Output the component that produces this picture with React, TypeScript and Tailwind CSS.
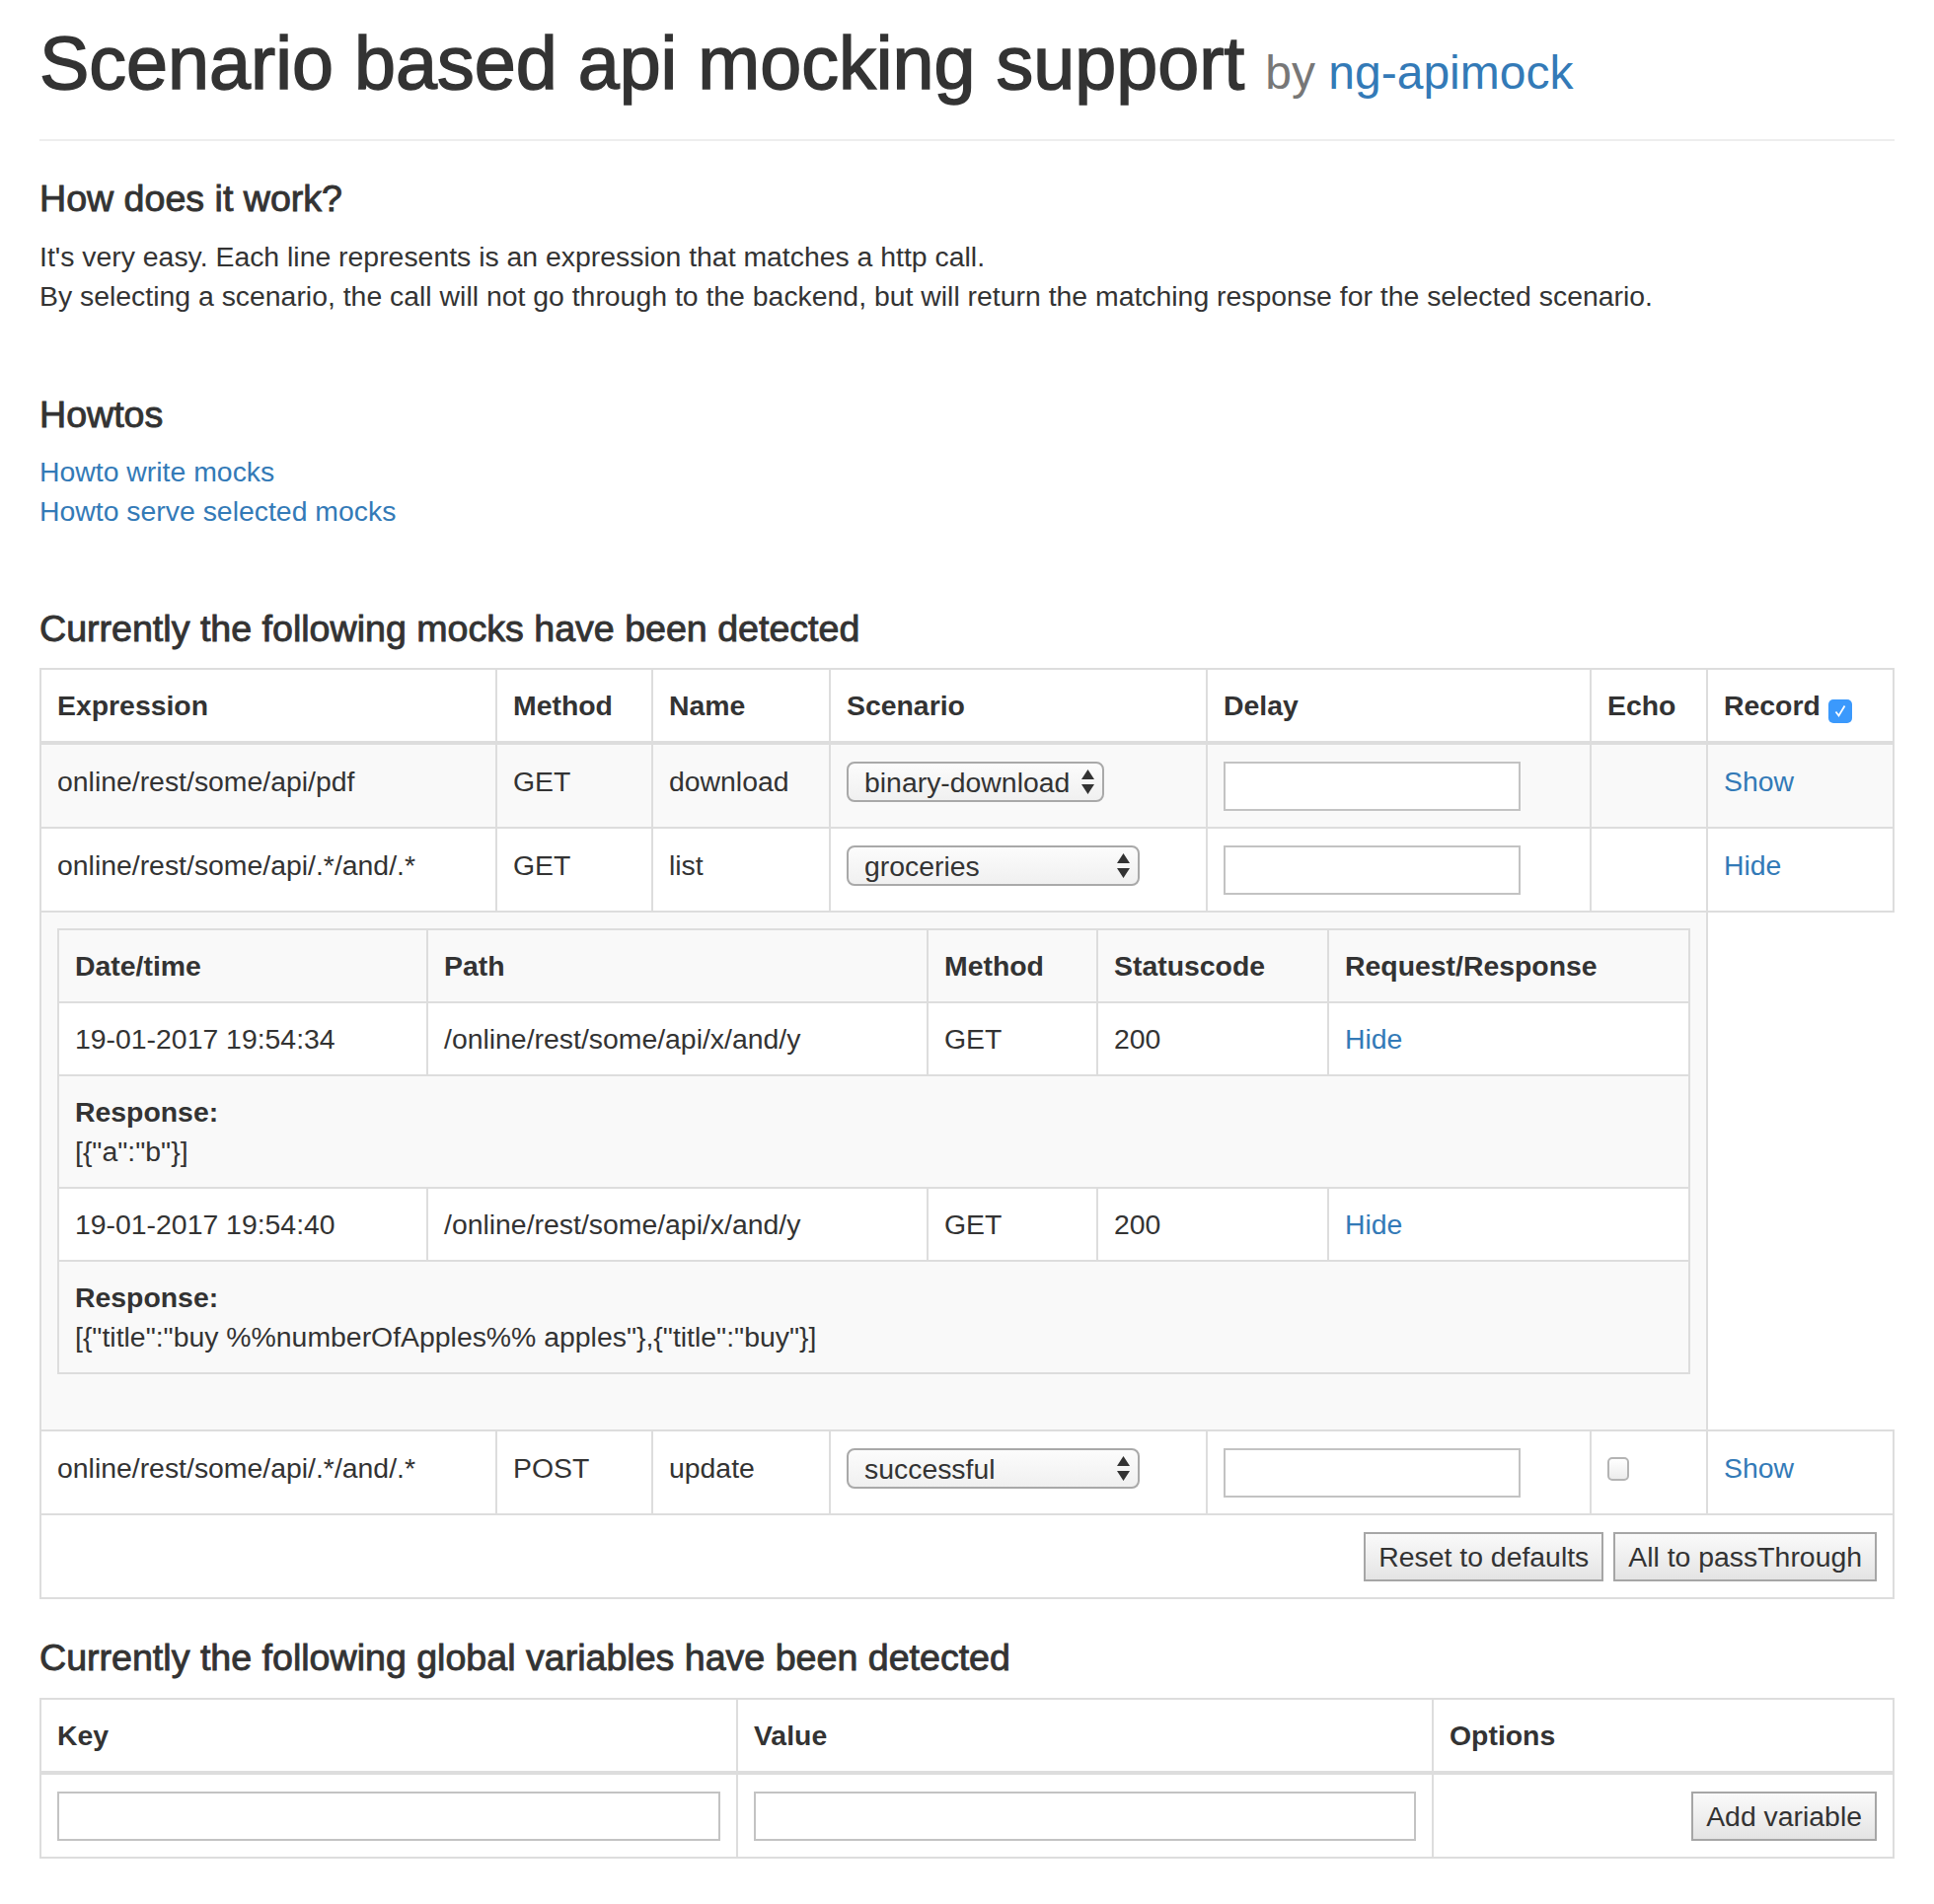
import React from 'react';

const head = 'border-2 border-b-4 border-[#ddd] p-[16px] text-left align-bottom font-bold';
const cell = 'border-2 border-[#ddd] px-[16px] pt-[17px] pb-[16px] align-top';
const subHead = 'border-2 border-[#ddd] p-[16px] text-left align-bottom font-bold';
const subCell = 'border-2 border-[#ddd] p-[16px] align-top';
const heading = "text-[37.6px] leading-[40px] [-webkit-text-stroke:0.9px_#333]";

const Arrows: React.FC = () => (
  <svg width="13" height="25" viewBox="0 0 13 25" className="shrink-0">
    <path d="M6.5 0 13 10H0Z M0 15h13l-6.5 10Z" fill="#333" />
  </svg>
);

// native looking select, as the mac browser draws it
const FakeSelect: React.FC<{ value: string; className: string }> = ({ value, className }) => (
  <div
    className={`flex h-[41px] items-center justify-between rounded-[8px] border-2 border-[#a9a9a9] bg-linear-to-b from-[#fcfcfc] to-[#f0f0f0] pl-[16px] pr-[8px] ${className}`}
  >
    <span className="whitespace-nowrap">{value}</span>
    <Arrows />
  </div>
);

const DelayInput: React.FC = () => (
  <input type="text" className="block h-[50px] w-[301px] border-2 border-[#c3c3c3] bg-white" />
);

const Button: React.FC<{ children: React.ReactNode }> = ({ children }) => (
  <button className="h-[50px] border-2 border-[#a6a6a6] bg-linear-to-b from-[#fafafa] to-[#e4e4e4] px-[13px] leading-[40px] text-[#333]">
    {children}
  </button>
);

interface CallRow {
  time: string;
  response: string;
}

const calls: CallRow[] = [
  { time: '19-01-2017 19:54:34', response: '[{"a":"b"}]' },
  { time: '19-01-2017 19:54:40', response: '[{"title":"buy %%numberOfApples%% apples"},{"title":"buy"}]' },
];

const Recordings: React.FC = () => (
  <table className="mb-[40px] w-full table-fixed border-collapse">
    <colgroup>
      <col className="w-[374px]" />
      <col className="w-[507px]" />
      <col className="w-[172px]" />
      <col className="w-[234px]" />
      <col />
    </colgroup>
    <thead>
      <tr>
        <th className={subHead}>Date/time</th>
        <th className={subHead}>Path</th>
        <th className={subHead}>Method</th>
        <th className={subHead}>Statuscode</th>
        <th className={subHead}>Request/Response</th>
      </tr>
    </thead>
    <tbody>
      {calls.map((c) => (
        <React.Fragment key={c.time}>
          <tr className="bg-white">
            <td className={subCell}>{c.time}</td>
            <td className={subCell}>/online/rest/some/api/x/and/y</td>
            <td className={subCell}>GET</td>
            <td className={subCell}>200</td>
            <td className={subCell}>
              <a className="text-[#337ab7]">Hide</a>
            </td>
          </tr>
          <tr className="bg-[#f9f9f9]">
            <td colSpan={5} className={subCell}>
              <b>Response:</b>
              <br />
              {c.response}
            </td>
          </tr>
        </React.Fragment>
      ))}
    </tbody>
  </table>
);

export default function App() {
  return (
    <div className="min-h-screen bg-white font-['Liberation_Sans',Arial,sans-serif] text-[28.4px] leading-[40px] text-[#333]">
      <div className="px-[40px]">
        {/* Page header */}
        <div className="border-b-2 border-[#eee] pt-[22px] pb-[35px]">
          <h1 className="whitespace-nowrap text-[75.5px] leading-[84px] [-webkit-text-stroke:1.5px_#333]">
            Scenario based api mocking support{' '}
            <small className="text-[48px] leading-none text-[#777] [-webkit-text-stroke:0px]">
              by <a className="text-[#337ab7]">ng-apimock</a>
            </small>
          </h1>
        </div>

        <h4 className={`mt-[38px] ${heading}`}>How does it work?</h4>
        <p className="mt-[19px]">
          It's very easy. Each line represents is an expression that matches a http call.
          <br />
          By selecting a scenario, the call will not go through to the backend, but will return the matching
          response for the selected scenario.
        </p>

        <h4 className={`mt-[80px] ${heading}`}>Howtos</h4>
        <div className="mt-[18px]">
          <a className="block text-[#337ab7]">Howto write mocks</a>
          <a className="block text-[#337ab7]">Howto serve selected mocks</a>
        </div>

        <h4 className={`mt-[79px] ${heading}`}>Currently the following mocks have been detected</h4>

        {/* Mocks */}
        <table className="mt-[20px] w-full table-fixed border-collapse">
          <colgroup>
            <col className="w-[462px]" />
            <col className="w-[158px]" />
            <col className="w-[180px]" />
            <col className="w-[382px]" />
            <col className="w-[389px]" />
            <col className="w-[118px]" />
            <col />
          </colgroup>
          <thead>
            <tr>
              <th className={head}>Expression</th>
              <th className={head}>Method</th>
              <th className={head}>Name</th>
              <th className={head}>Scenario</th>
              <th className={head}>Delay</th>
              <th className={head}>Echo</th>
              <th className={`${head} whitespace-nowrap`}>
                Record
                <span className="ml-[8px] inline-flex h-[24px] w-[24px] items-center justify-center rounded-[5px] bg-[#3b99fc] align-[-4px]">
                  <svg width="16" height="16" viewBox="0 0 16 16">
                    <path d="M3.5 8.5 6.5 12.5 12.5 2.5" fill="none" stroke="#fff" strokeWidth="1.8" />
                  </svg>
                </span>
              </th>
            </tr>
          </thead>
          <tbody>
            <tr className="bg-[#f9f9f9]">
              <td className={cell}>online/rest/some/api/pdf</td>
              <td className={cell}>GET</td>
              <td className={cell}>download</td>
              <td className={cell}>
                <FakeSelect value="binary-download" className="w-[261px]" />
              </td>
              <td className={cell}>
                <DelayInput />
              </td>
              <td className={cell}></td>
              <td className={cell}>
                <a className="text-[#337ab7]">Show</a>
              </td>
            </tr>
            <tr>
              <td className={cell}>online/rest/some/api/.*/and/.*</td>
              <td className={cell}>GET</td>
              <td className={cell}>list</td>
              <td className={cell}>
                <FakeSelect value="groceries" className="w-[297px]" />
              </td>
              <td className={cell}>
                <DelayInput />
              </td>
              <td className={cell}></td>
              <td className={cell}>
                <a className="text-[#337ab7]">Hide</a>
              </td>
            </tr>
            <tr>
              <td colSpan={6} className={`${subCell} bg-[#f9f9f9]`}>
                <Recordings />
              </td>
            </tr>
            <tr>
              <td className={cell}>online/rest/some/api/.*/and/.*</td>
              <td className={cell}>POST</td>
              <td className={cell}>update</td>
              <td className={cell}>
                <FakeSelect value="successful" className="w-[297px]" />
              </td>
              <td className={cell}>
                <DelayInput />
              </td>
              <td className={cell}>
                <span className="mt-[9px] block h-[24px] w-[22px] rounded-[5px] border-2 border-[#b4b4b4] bg-linear-to-b from-white to-[#ececec]" />
              </td>
              <td className={cell}>
                <a className="text-[#337ab7]">Show</a>
              </td>
            </tr>
            <tr>
              <td colSpan={7} className={cell}>
                <div className="flex justify-end gap-[10px]">
                  <Button>Reset to defaults</Button>
                  <Button>All to passThrough</Button>
                </div>
              </td>
            </tr>
          </tbody>
        </table>

        <h4 className={`mt-[39px] ${heading}`}>Currently the following global variables have been detected</h4>

        {/* Global variables */}
        <table className="mt-[21px] mb-[40px] w-full table-fixed border-collapse">
          <colgroup>
            <col className="w-[706px]" />
            <col className="w-[705px]" />
            <col />
          </colgroup>
          <thead>
            <tr>
              <th className={head}>Key</th>
              <th className={head}>Value</th>
              <th className={head}>Options</th>
            </tr>
          </thead>
          <tbody>
            <tr>
              <td className={cell}>
                <input type="text" className="block h-[50px] w-full border-2 border-[#c3c3c3] bg-white" />
              </td>
              <td className={cell}>
                <input type="text" className="block h-[50px] w-full border-2 border-[#c3c3c3] bg-white" />
              </td>
              <td className={cell}>
                <div className="flex justify-end">
                  <Button>Add variable</Button>
                </div>
              </td>
            </tr>
          </tbody>
        </table>
      </div>
    </div>
  );
}
